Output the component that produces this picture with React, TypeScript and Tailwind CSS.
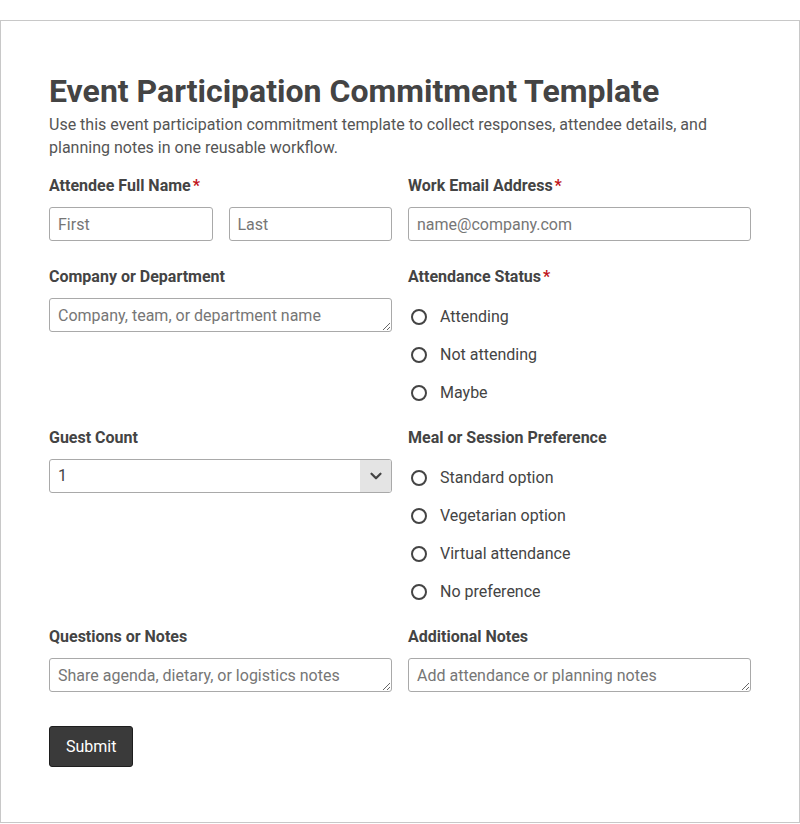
import React from 'react'
import { ChevronDown } from 'lucide-react'

const font = { fontFamily: 'Roboto, "Noto Sans", sans-serif' }

function Label({ text, required }: { text: string; required?: boolean }) {
  return (
    <div className="text-base font-bold leading-6 text-[#444] mb-[9px]">
      {text}
      {required && <span className="text-[#c0161c] ml-[2px]">*</span>}
    </div>
  )
}

const inputCls =
  'block w-full h-[34px] px-2 border border-[#a9a9a9] rounded-[3px] text-base text-[#444] placeholder:text-[#767676] bg-white outline-none'

const areaCls =
  'block w-full h-[34px] px-2 pt-[7px] pb-[5px] leading-5 border border-[#a9a9a9] rounded-[3px] text-base text-[#444] placeholder:text-[#767676] resize-y outline-none'

function Radio({ label }: { label: string }) {
  return (
    <label className="flex items-center h-5 text-base text-[#444]">
      <span className="ml-[3px] w-4 h-4 rounded-full border-2 border-[#444] bg-white shrink-0" />
      <span className="ml-[13px]">{label}</span>
    </label>
  )
}

function RadioGroup({ options }: { options: string[] }) {
  return (
    <div className="flex flex-col gap-[18px] pt-[9px] -mb-px">
      {options.map((o) => (
        <Radio key={o} label={o} />
      ))}
    </div>
  )
}

export default function App() {
  return (
    <div className="bg-white min-h-screen pt-5" style={font}>
      <div className="border border-[#c8c8c8] px-12 pt-[51px] pb-[55px]">
        <h1 className="text-[32px] font-bold leading-[38px] text-[#444] mb-[3px]">
          Event Participation Commitment Template
        </h1>
        <p className="text-base leading-[23px] text-[#555] mb-[15px]">
          Use this event participation commitment template to collect responses, attendee details, and
          planning notes in one reusable workflow.
        </p>

        <div className="grid grid-cols-2 gap-x-4 gap-y-6">
          {/* Row 1 */}
          <div>
            <Label text="Attendee Full Name" required />
            <div className="flex gap-4">
              <input className={inputCls} placeholder="First" />
              <input className={inputCls} placeholder="Last" />
            </div>
          </div>
          <div>
            <Label text="Work Email Address" required />
            <input className={inputCls} placeholder="name@company.com" />
          </div>

          {/* Row 2 */}
          <div>
            <Label text="Company or Department" />
            <textarea rows={1} className={areaCls} placeholder="Company, team, or department name" />
          </div>
          <div>
            <Label text="Attendance Status" required />
            <RadioGroup options={['Attending', 'Not attending', 'Maybe']} />
          </div>

          {/* Row 3 */}
          <div>
            <Label text="Guest Count" />
            <div className="h-[34px] border border-[#a9a9a9] rounded-[3px] flex items-center overflow-hidden">
              <span className="pl-2 text-base text-[#444] flex-1">1</span>
              <span className="w-[31px] h-full bg-[#e4e4e4] flex items-center justify-center text-[#444]">
                <ChevronDown size={18} strokeWidth={3} />
              </span>
            </div>
          </div>
          <div>
            <Label text="Meal or Session Preference" />
            <RadioGroup
              options={['Standard option', 'Vegetarian option', 'Virtual attendance', 'No preference']}
            />
          </div>

          {/* Row 4 */}
          <div>
            <Label text="Questions or Notes" />
            <textarea rows={1} className={areaCls} placeholder="Share agenda, dietary, or logistics notes" />
          </div>
          <div>
            <Label text="Additional Notes" />
            <textarea rows={1} className={areaCls} placeholder="Add attendance or planning notes" />
          </div>
        </div>

        <button className="mt-[34px] h-[41px] px-4 bg-[#3a3a3a] border border-[#1e1e1e] rounded-[3px] text-base text-white">
          Submit
        </button>
      </div>
    </div>
  )
}
